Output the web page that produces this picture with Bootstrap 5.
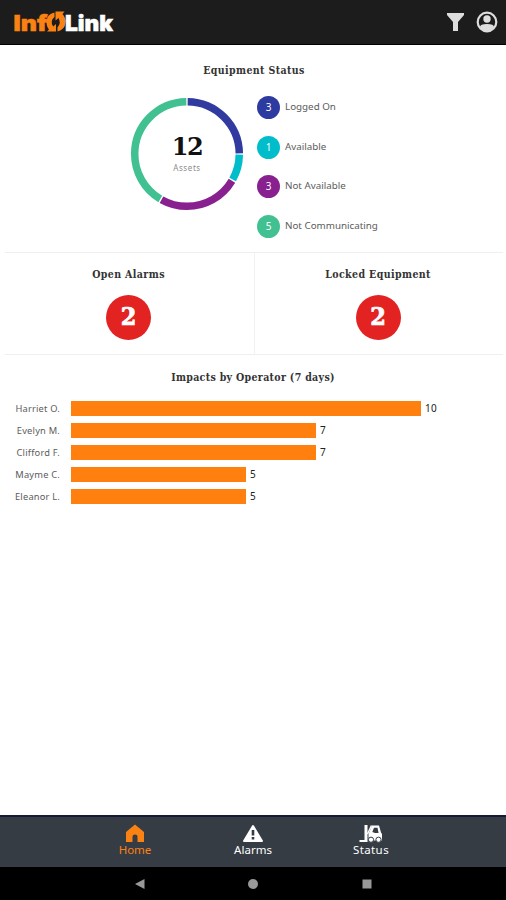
<!DOCTYPE html>
<html lang="en">
<head>
<meta charset="utf-8">
<meta name="viewport" content="width=device-width, initial-scale=1">
<title>InfoLink</title>
<link href="https://cdn.jsdelivr.net/npm/bootstrap@5.3.0/dist/css/bootstrap.min.css" rel="stylesheet">
<style>
body{font-family:"Noto Sans","Open Sans",sans-serif;height:900px;overflow:hidden;background:#fff}
svg{display:block}
.top-bar{height:45px;background:#1c1c1c;border-bottom:1px solid #000;padding:0 8px 0 13px}
.slab{font-family:"DejaVu Serif Condensed","DejaVu Serif",serif;font-stretch:condensed;font-weight:700}
.heading{font-size:10.5px;line-height:16px;color:#333;margin:0;text-align:center;white-space:nowrap;letter-spacing:.4px}
.impacts .heading{letter-spacing:.33px}
.status-panel{height:208px;margin:0 3px 0 5px;padding-top:17px;border-bottom:1px solid #efefef}
.status-body{padding:18px 0 0 125px;gap:14px}
.ring-box{width:114px;height:114px;margin-top:1px}
.ring-label{inset:0;padding-top:34px}
.ring-total{font-family:"DejaVu Serif",serif;font-stretch:normal;font-size:24px;letter-spacing:-1.5px;line-height:32px;color:#111}
.ring-caption{font-size:8px;line-height:10px;color:#8c8c8c;letter-spacing:.6px}
.legend-list{gap:16.5px;margin-left:-1px}
.legend-row{height:23px;gap:5px;font-size:9.8px;color:#5c5c5c;white-space:nowrap}
.dot{width:23px;height:23px;color:#fff;font-size:10px}
.c-blue{background:#2d3a9f}.c-cyan{background:#00bdcb}.c-purple{background:#88208f}.c-green{background:#41c192}
.counts{height:102px;margin:0 3px 0 5px;border-bottom:1px solid #efefef}
.count-cell{padding-top:13px}
.count-cell:first-child{padding-right:2px}
.count-cell+.count-cell{border-left:1px solid #f2f2f2;padding-right:2px}
.count-dot{width:45px;height:45px;background:#e32222;color:#fff;font-size:25px;margin-top:13px;line-height:1;padding-bottom:2px;-webkit-text-stroke:.7px #fff}
.impacts{padding-top:14px}
.chart{margin-top:16px;gap:7px}
.chart-row{height:15px}
.who{width:60px;margin-right:11px;text-align:right;font-size:9.3px;letter-spacing:.2px;color:#5c5c5c;white-space:nowrap}
.track{width:350px}
.fill{height:15px;background:#ff800e;flex:none}
.num{font-size:10px;color:#222;margin-left:4px;line-height:14px;letter-spacing:.2px}
.tab-bar{height:52px;background:#363c44;border-top:2px solid #15193a;padding:0 76px}
.tab-item{width:118px;color:#fff;font-size:11.5px;line-height:15px;padding-top:7px;text-decoration:none}
.tab-item svg{margin-bottom:-1px}
.tab-item:last-child{letter-spacing:.4px}
.tab-item.on{color:#fa8213}
.system-bar{height:33px;background:#000;padding:0 82px 0 83px}
.system-bar div{width:33.333%}
</style>
<script src="https://cdn.jsdelivr.net/npm/bootstrap@5.3.0/dist/js/bootstrap.bundle.min.js"></script>
</head>
<body class="d-flex flex-column">
<header class="top-bar d-flex align-items-center justify-content-between flex-shrink-0">
  <svg width="102" height="28" viewBox="13 8 102 28" font-family="Inter, sans-serif" font-weight="900" font-size="22">
    <text x="13.5" y="31" textLength="34" lengthAdjust="spacingAndGlyphs" fill="#fa8213" stroke="#fa8213" stroke-width=".5">Inf</text>
    <path d="M54.500 12.500Q46.500 14 46.500 22Q46.500 27 49 29.500L47 31.500H56V24L53.200 26.500Q49.500 21 54.500 17ZM55.500 11.500H64.500L62.500 14Q65.500 17 65.500 22Q65 30 57.500 31.500V27.500Q61.500 23 58.500 18L55.500 20.500Z" fill="#fa8213"/>
    <text x="65" y="31" textLength="48" lengthAdjust="spacingAndGlyphs" fill="#fff" stroke="#fff" stroke-width=".5">Link</text>
  </svg>
  <svg width="52" height="24" viewBox="446 10 52 24">
    <path d="M447 13H464V15L458 22V31H453V22L447 15Z" fill="#ddd"/>
    <circle cx="487" cy="22" r="9.3" fill="none" stroke="#ddd" stroke-width="2.2"/>
    <circle cx="487" cy="19" r="3.7" fill="#ddd"/>
    <path d="M480 27Q480 24 487 24T494 27Q491 31 487 31T480 27Z" fill="#ddd"/>
  </svg>
</header>
<main class="flex-grow-1">
  <section class="status-panel">
    <h2 class="heading slab">Equipment Status</h2>
    <div class="status-body d-flex">
      <div class="ring-box position-relative">
        <svg width="114" height="114" viewBox="0 0 114 114" fill="none" stroke-width="7.5">
          <g transform="rotate(-90 57 57)">
            <circle cx="57" cy="57" r="52.3" pathLength="12" stroke="#303a9f" stroke-dasharray="2.95 9.05" stroke-dashoffset="-.025"/>
            <circle cx="57" cy="57" r="52.3" pathLength="12" stroke="#00bdcb" stroke-dasharray=".95 11.05" stroke-dashoffset="-3.025"/>
            <circle cx="57" cy="57" r="52.3" pathLength="12" stroke="#88208f" stroke-dasharray="2.95 9.05" stroke-dashoffset="-4.025"/>
            <circle cx="57" cy="57" r="52.3" pathLength="12" stroke="#41c192" stroke-dasharray="4.95 7.05" stroke-dashoffset="-7.025"/>
          </g>
        </svg>
        <div class="ring-label position-absolute text-center">
          <div class="ring-total slab">12</div>
          <div class="ring-caption">Assets</div>
        </div>
      </div>
      <div class="legend-list d-flex flex-column">
        <div class="legend-row d-flex align-items-center"><span class="dot c-blue rounded-circle d-flex align-items-center justify-content-center">3</span>Logged On</div>
        <div class="legend-row d-flex align-items-center"><span class="dot c-cyan rounded-circle d-flex align-items-center justify-content-center">1</span>Available</div>
        <div class="legend-row d-flex align-items-center"><span class="dot c-purple rounded-circle d-flex align-items-center justify-content-center">3</span>Not Available</div>
        <div class="legend-row d-flex align-items-center"><span class="dot c-green rounded-circle d-flex align-items-center justify-content-center">5</span>Not Communicating</div>
      </div>
    </div>
  </section>
  <section class="counts d-flex">
    <div class="count-cell w-50 d-flex flex-column align-items-center"><h2 class="heading slab">Open Alarms</h2><div class="count-dot slab rounded-circle d-flex align-items-center justify-content-center">2</div></div>
    <div class="count-cell w-50 d-flex flex-column align-items-center"><h2 class="heading slab">Locked Equipment</h2><div class="count-dot slab rounded-circle d-flex align-items-center justify-content-center">2</div></div>
  </section>
  <section class="impacts">
    <h2 class="heading slab">Impacts by Operator (7 days)</h2>
    <div class="chart d-flex flex-column">
      <div class="chart-row d-flex align-items-center"><span class="who">Harriet O.</span><div class="track d-flex"><div class="fill" style="width:100%"></div><span class="num">10</span></div></div>
      <div class="chart-row d-flex align-items-center"><span class="who">Evelyn M.</span><div class="track d-flex"><div class="fill" style="width:70%"></div><span class="num">7</span></div></div>
      <div class="chart-row d-flex align-items-center"><span class="who">Clifford F.</span><div class="track d-flex"><div class="fill" style="width:70%"></div><span class="num">7</span></div></div>
      <div class="chart-row d-flex align-items-center"><span class="who">Mayme C.</span><div class="track d-flex"><div class="fill" style="width:50%"></div><span class="num">5</span></div></div>
      <div class="chart-row d-flex align-items-center"><span class="who">Eleanor L.</span><div class="track d-flex"><div class="fill" style="width:50%"></div><span class="num">5</span></div></div>
    </div>
  </section>
</main>
<nav class="tab-bar d-flex flex-shrink-0">
  <a href="#" class="tab-item on d-flex flex-column align-items-center">
    <svg width="20" height="19" viewBox="0 0 20 19"><path d="M10 .5 19 8V18H12.500V12.500Q12.500 10.500 10 10.500T7.500 12.500V18H1V8Z" fill="#fa8213"/></svg>Home</a>
  <a href="#" class="tab-item d-flex flex-column align-items-center">
    <svg width="22" height="19" viewBox="0 0 22 19"><path d="M11 2 20 17H2Z" fill="#fff" stroke="#fff" stroke-width="2" stroke-linejoin="round"/><path d="M11 6V11.500M11 13V15.500" stroke="#363c44" stroke-width="2.600"/></svg>Alarms</a>
  <a href="#" class="tab-item d-flex flex-column align-items-center">
    <svg width="24" height="19" viewBox="0 0 24 19"><path d="M5.500 1H8.500V18H.500V16H5.500Z" fill="#fff"/><path d="M9.500 10 13 1.500H20L22 8.500 23 10V16.500H9.500Z" fill="#fff"/><path d="M13.300 8 15 3.700H18.500L19.600 9H16Z" fill="#363c44"/><path d="M12.500 1.500 8.500 10" stroke="#fff" stroke-width="1.500"/><g fill="#fff" stroke="#363c44" stroke-width="1"><circle cx="12" cy="15.700" r="2.600"/><circle cx="19.500" cy="15.700" r="2.600"/></g></svg>Status</a>
</nav>
<footer class="system-bar d-flex align-items-center flex-shrink-0">
  <div class="d-flex justify-content-center"><svg width="10" height="10" viewBox="0 0 10 10"><path d="M0 5 9.500 0V10Z" fill="#999"/></svg></div>
  <div class="d-flex justify-content-center"><svg width="10" height="10" viewBox="0 0 10 10"><circle cx="5" cy="5" r="5" fill="#999"/></svg></div>
  <div class="d-flex justify-content-center"><svg width="10" height="10" viewBox="0 0 10 10"><path d="M.500 .500H9.500V9.500H.500Z" fill="#999"/></svg></div>
</footer>
</body>
</html>
